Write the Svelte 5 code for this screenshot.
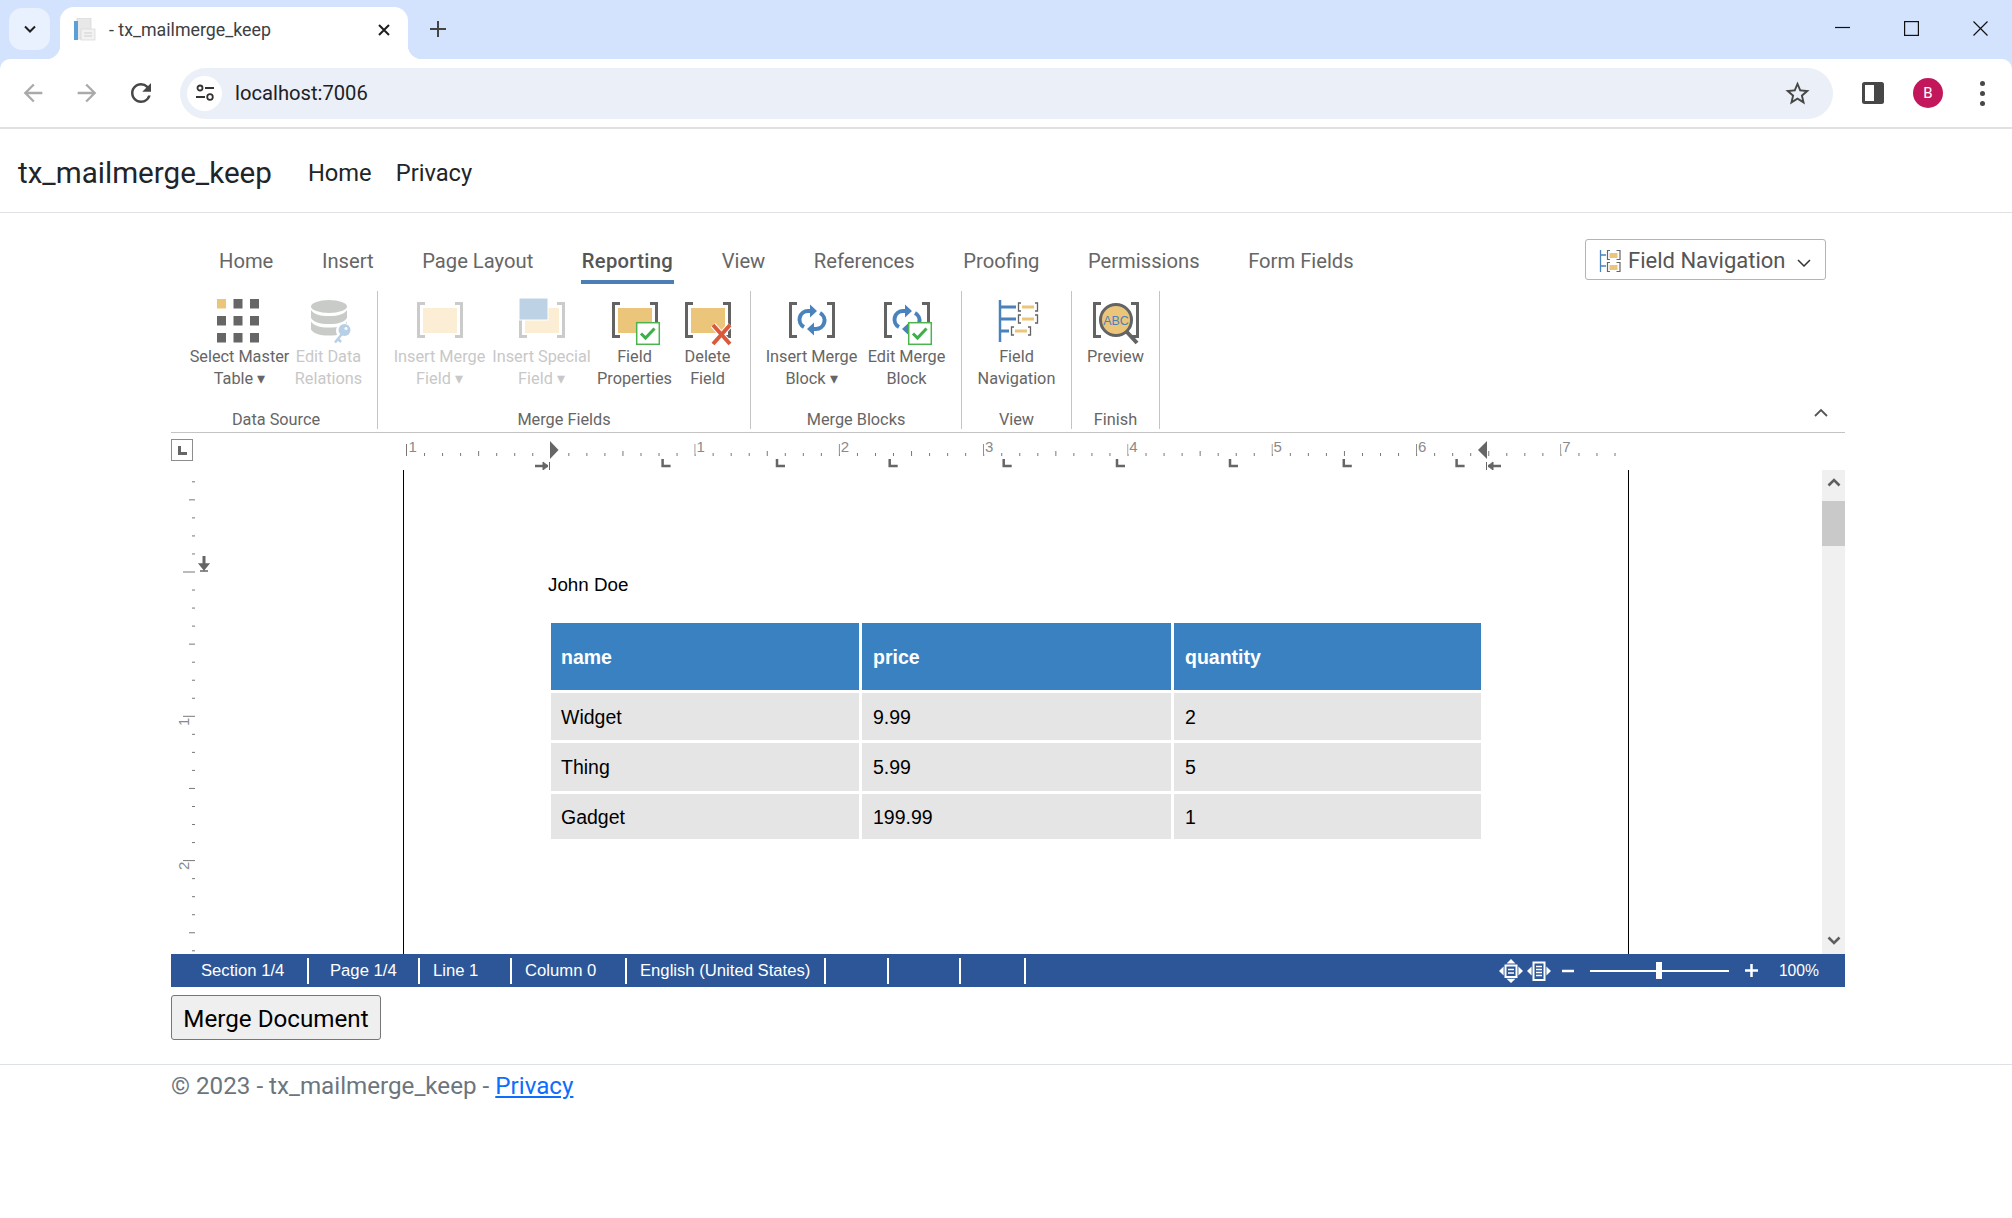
<script>
	const tabs = ['Home', 'Insert', 'Page Layout', 'Reporting', 'View', 'References', 'Proofing', 'Permissions', 'Form Fields']

	const groups = [
		{ label: 'Data Source', width: 207, buttons: [
			{ icon: 'grid', lines: ['Select Master', 'Table ▾'], width: 100 },
			{ icon: 'database', lines: ['Edit Data', 'Relations'], width: 68, off: true }
		] },
		{ label: 'Merge Fields', width: 373, buttons: [
			{ icon: 'field', lines: ['Insert Merge', 'Field ▾'], width: 96, off: true },
			{ icon: 'special', lines: ['Insert Special', 'Field ▾'], width: 98, off: true },
			{ icon: 'props', lines: ['Field', 'Properties'], width: 78 },
			{ icon: 'delete', lines: ['Delete', 'Field'], width: 58 }
		] },
		{ label: 'Merge Blocks', width: 211, buttons: [
			{ icon: 'block', lines: ['Insert Merge', 'Block ▾'], width: 96 },
			{ icon: 'editblock', lines: ['Edit Merge', 'Block'], width: 84 }
		] },
		{ label: 'View', width: 110, buttons: [
			{ icon: 'nav', lines: ['Field', 'Navigation'], width: 100 }
		] },
		{ label: 'Finish', width: 88, buttons: [
			{ icon: 'preview', lines: ['Preview'], width: 70 }
		] }
	]

	const inch = 144.3
	const rulerStart = 406.5
	const hTicks = Array.from({ length: 68 }, (_, i) => i)
		.map(i => ({ x: rulerStart + i * inch / 8, kind: i % 8 === 0 ? 12 : i % 4 === 0 ? 6 : 3 }))
	const hLabels = [[406.5, 1], [694.5, 1], [838.8, 2], [983, 3], [1127.3, 4], [1271.6, 5], [1415.9, 6], [1560.2, 7]]
	const lTabs = [665.6, 780, 892.7, 1006.7, 1120, 1233, 1346.8, 1459.6]

	const vTicks = Array.from({ length: 27 }, (_, i) => i - 5)
		.map(i => ({ y: 573 + i * inch / 8, kind: i % 8 === 0 ? 12 : i % 4 === 0 ? 6 : 3 }))

	const rows = [['Widget', '9.99', '2'], ['Thing', '5.99', '5'], ['Gadget', '199.99', '1']]

	const statusCells = [
		{ text: 'Section 1/4', width: 138, pad: 30 },
		{ text: 'Page 1/4', width: 111, pad: 21 },
		{ text: 'Line 1', width: 92, pad: 13 },
		{ text: 'Column 0', width: 115, pad: 13 },
		{ text: 'English (United States)', width: 199, pad: 13 },
		{ text: '', width: 63, pad: 0 },
		{ text: '', width: 72, pad: 0 },
		{ text: '', width: 65, pad: 0 }
	]
</script>

{#snippet brackets(color)}
	<path d="M9 5.500H2.500V38.500H9M39 5.500H45.500V38.500H39" fill="none" stroke={color} stroke-width="3" />
{/snippet}

{#snippet checkbox()}
	<rect x="25.700" y="24.700" width="22.600" height="21.600" fill="#fff" stroke="#4db44d" stroke-width="1.500" />
	<path d="M30 35.500l4.500 4.500 9-9.500" fill="none" stroke="#3fae49" stroke-width="3" />
{/snippet}

{#snippet cycle()}
	<g fill="none" stroke="#4a82bc" stroke-width="4">
		<path d="M23 13H20A8.500 8.500 0 0 0 16 29" />
		<path d="M25 31H28A8.500 8.500 0 0 0 32 15" />
	</g>
	<path d="M22 6.500L29 13 22 19.500ZM26 24.500L19 31 26 37.500Z" fill="#4a82bc" />
{/snippet}

{#snippet ribbonIcon(name)}
	<svg class="ribbon-icon" viewBox="0 0 48 48" width="48" height="48">
		{#if name === 'grid'}
			{#each [0, 1, 2] as r}
				{#each [0, 1, 2] as c}
					<rect x={1 + c * 16.500} y={1 + r * 17} width="9" height="9.500" fill={r === 0 && c === 0 ? '#ebc57a' : '#666'} />
				{/each}
			{/each}
		{:else if name === 'database'}
			<g fill="#c9cbc9">
				<ellipse cx="24" cy="8.500" rx="18" ry="6.500" />
				<path d="M6 12c3 4 8 6 18 6s15-2 18-6v8c-3 4-8 6-18 6S9 24 6 20z" />
				<path d="M6 23.500c3 4 8 6 18 6s15-2 18-6v8c-3 4-8 6-18 6s-15-2-18-6z" />
			</g>
			<circle cx="39" cy="33" r="8" fill="#fff" />
			<path d="M38 36L30 45" stroke="#fff" stroke-width="6" />
			<circle cx="39.500" cy="32" r="6" fill="#b7d0e8" />
			<path d="M37 36L30 44.500M33 41l3 3" stroke="#b7d0e8" stroke-width="2.500" fill="none" />
			<circle cx="41" cy="30.500" r="1.500" fill="#fff" />
		{:else if name === 'field'}
			{@render brackets('#cbcbcb')}
			<rect x="7" y="10" width="34" height="25" fill="#fbeed5" />
		{:else if name === 'special'}
			{@render brackets('#cbcbcb')}
			<rect x="7" y="10" width="34" height="25" fill="#fbeed5" />
			<rect x="1" y="0" width="29" height="22" fill="#bed2e5" stroke="#fff" stroke-width="1" />
		{:else if name === 'props'}
			{@render brackets('#636363')}
			<rect x="7" y="10" width="34" height="25" fill="#ebc57a" />
			{@render checkbox()}
		{:else if name === 'delete'}
			{@render brackets('#636363')}
			<rect x="7" y="10" width="34" height="25" fill="#ebc57a" />
			<path d="M29 27L46 46M46 27L29 46" stroke="#fff" stroke-width="6" />
			<path d="M29 27L46 46M46 27L29 46" stroke="#d9593a" stroke-width="4" />
		{:else if name === 'block'}
			{@render brackets('#636363')}
			{@render cycle()}
		{:else if name === 'editblock'}
			{@render brackets('#636363')}
			{@render cycle()}
			{@render checkbox()}
		{:else if name === 'nav'}
			<path d="M7 2V44" stroke="#4a82bc" stroke-width="2.500" />
			<path d="M7 9H23M7 21H23M7 33H16" stroke="#4a82bc" stroke-width="3" />
			<g fill="none" stroke="#636363" stroke-width="1.300">
				<path d="M28 5H25.500V13H28M42 5H44.500V13H42" />
				<path d="M28 17H25.500V25H28M42 17H44.500V25H42" />
				<path d="M21 29H18.500V37H21M35 29H37.500V37H35" />
			</g>
			<path d="M29 9H41M29 21H41M22 33H34" stroke="#ebc57a" stroke-width="3" />
		{:else if name === 'preview'}
			{@render brackets('#636363')}
			<path d="M34 33L45 45" stroke="#636363" stroke-width="4" />
			<circle cx="24" cy="22" r="15.500" fill="#ebc57a" stroke="#636363" stroke-width="3" />
			<text x="24" y="26.500" text-anchor="middle" class="abc">ABC</text>
		{/if}
	</svg>
{/snippet}

{#snippet fitIcon(both)}
	<svg viewBox="0 0 24 24" width="24" height="24">
		{#if both}
			<rect x="6.500" y="6.500" width="11" height="11.500" fill="none" stroke="#fff" stroke-width="2" />
			<path d="M9 10.500H15M9 14H15" stroke="#fff" stroke-width="1.600" />
			<path d="M7.500 4.500H16.500L12 0ZM7.500 19.800H16.500L12 24Z" fill="#fff" />
		{:else}
			<rect x="6.500" y="3.500" width="11" height="17.500" fill="none" stroke="#fff" stroke-width="2" />
			<path d="M9 7.500H15M9 10.500H15M9 13.500H15M9 16.500H15" stroke="#fff" stroke-width="1.500" />
		{/if}
		<path d="M4.600 7.500V16.500L0 12ZM19.400 7.500V16.500L24 12Z" fill="#fff" />
	</svg>
{/snippet}

<div class="chrome">
	<div class="tabstrip">
		<button class="tabs-menu" aria-label="Tabs">
			<svg viewBox="0 0 12 8" width="12" height="8"><path d="M1 1.500l5 5 5-5" fill="none" stroke="#1f1f1f" stroke-width="2" /></svg>
		</button>
		<div class="browser-tab">
			<svg class="favicon" viewBox="0 0 23 23" width="23" height="23">
				<rect x="4" y="0" width="14" height="21" fill="#e8e8e8" stroke="#d0d0d0" stroke-width=".6" />
				<rect x="1" y="3" width="4" height="19" fill="#5a9fd6" />
				<rect x="8" y="11" width="14" height="11" fill="#f2f2f2" stroke="#cfcfcf" stroke-width=".6" />
				<path d="M11 15H19M11 18H19" stroke="#cfcfcf" />
			</svg>
			<span class="tab-title">- tx_mailmerge_keep</span>
			<svg class="tab-close" viewBox="0 0 12 12" width="12" height="12"><path d="M1 1L11 11M11 1L1 11" stroke="#1f1f1f" stroke-width="2" /></svg>
		</div>
		<svg class="new-tab" viewBox="0 0 16 16" width="16" height="16"><path d="M8 0V16M0 8H16" stroke="#444" stroke-width="2" /></svg>
		<div class="window-buttons">
			<svg viewBox="0 0 15 15" width="15" height="15"><path d="M0 6.500H15" stroke="#111" stroke-width="1.200" /></svg>
			<svg viewBox="0 0 15 15" width="15" height="15"><rect x=".6" y=".6" width="13.800" height="13.800" fill="none" stroke="#111" stroke-width="1.200" /></svg>
			<svg viewBox="0 0 15 15" width="15" height="15"><path d="M.5 .5L14.500 14.500M14.500 .5L.5 14.500" stroke="#111" stroke-width="1.200" /></svg>
		</div>
	</div>
	<div class="toolbar">
		<svg class="nav-btn" viewBox="0 0 24 24" width="28" height="28"><path fill="#aaa" d="M20 11H7.830l5.590-5.590L12 4l-8 8 8 8 1.410-1.410L7.830 13H20v-2z" /></svg>
		<svg class="nav-btn fwd" viewBox="0 0 24 24" width="28" height="28"><path fill="#aaa" d="M4 11h12.170l-5.590-5.590L12 4l8 8-8 8-1.410-1.410L16.170 13H4v-2z" /></svg>
		<svg class="nav-btn reload" viewBox="0 0 24 24" width="30" height="30"><path fill="#474747" d="M17.650 6.350A7.958 7.958 0 0 0 12 4c-4.420 0-7.990 3.580-7.990 8s3.570 8 7.990 8c3.730 0 6.840-2.550 7.730-6h-2.080A5.990 5.990 0 0 1 12 18c-3.310 0-6-2.690-6-6s2.690-6 6-6c1.660 0 3.140.690 4.220 1.780L13 11h7V4l-2.350 2.350z" /></svg>
		<div class="omnibox">
			<span class="site-info">
				<svg viewBox="0 0 20 20" width="20" height="20">
					<circle cx="5" cy="5" r="2.500" fill="none" stroke="#333" stroke-width="1.800" />
					<path d="M10 5H19M1 14H10" stroke="#333" stroke-width="2" />
					<circle cx="15" cy="14" r="2.800" fill="none" stroke="#333" stroke-width="1.800" />
				</svg>
			</span>
			<span class="url">localhost:7006</span>
			<svg class="star" viewBox="0 0 24 24" width="29" height="29"><path fill="#474747" d="M22 9.240l-7.190-.620L12 2 9.190 8.630 2 9.240l5.460 4.730L5.820 21 12 17.270 18.180 21l-1.630-7.030L22 9.240zM12 15.400l-3.760 2.270 1-4.280-3.320-2.880 4.380-.380L12 6.100l1.710 4.040 4.380.380-3.320 2.880 1 4.280L12 15.400z" /></svg>
		</div>
		<svg class="side-panel" viewBox="0 0 22 22" width="22" height="22"><rect x="0" y="0" width="22" height="22" rx="2.500" fill="#474747" /><rect x="3" y="3" width="9" height="16" fill="#fff" /></svg>
		<span class="avatar">B</span>
		<span class="dots"><i></i><i></i><i></i></span>
	</div>
</div>

<nav class="navbar">
	<span class="brand">tx_mailmerge_keep</span>
	<span class="nav-link">Home</span>
	<span class="nav-link">Privacy</span>
</nav>

<main>
	<div class="editor">
		<div class="ribbon-tabs">
			{#each tabs as tab}
				<span class="ribbon-tab" class:active={tab === 'Reporting'}>{tab}</span>
			{/each}
			<div class="field-nav">
				<svg viewBox="0 0 22 24" width="22" height="24">
					<path d="M1.500 1V23" stroke="#4a82bc" stroke-width="1.300" />
					<path d="M1.500 6H7M1.500 17H7" stroke="#4a82bc" stroke-width="1.300" />
					<g fill="none" stroke="#666" stroke-width="1.200">
						<path d="M11 1.500H8.500V10.500H11M17.500 1.500H21V10.500H17.500" />
						<path d="M11 13.500H8.500V22.500H11M17.500 13.500H21V22.500H17.500" />
					</g>
					<rect x="10.500" y="4" width="8" height="5" fill="#ebc57a" />
					<rect x="10.500" y="16" width="8" height="5" fill="#ebc57a" />
				</svg>
				<span>Field Navigation</span>
				<svg class="chev" viewBox="0 0 14 8" width="14" height="8"><path d="M1 1l6 6 6-6" fill="none" stroke="#333" stroke-width="1.500" /></svg>
			</div>
		</div>

		<div class="ribbon">
			{#each groups as group}
				<section class="group" style="width: {group.width}px">
					<div class="group-buttons">
						{#each group.buttons as btn}
							<div class="ribbon-btn" class:off={btn.off} style="width: {btn.width}px">
								{@render ribbonIcon(btn.icon)}
								{#each btn.lines as line}
									<span class="btn-line">{line}</span>
								{/each}
							</div>
						{/each}
					</div>
					<div class="group-label">{group.label}</div>
				</section>
			{/each}
			<svg class="collapse" viewBox="0 0 14 9" width="14" height="9"><path d="M1 8l6-6 6 6" fill="none" stroke="#555" stroke-width="1.800" /></svg>
		</div>

		<div class="ruler-row">
			<div class="ruler-corner"><span></span></div>
			<svg class="h-ruler" viewBox="193 434 1652 37" width="1652" height="37">
				{#each hTicks as t}
					<line x1={t.x} x2={t.x} y1={t.kind === 12 ? 445 : t.kind === 6 ? 452 : 454} y2="457" stroke="#777" />
				{/each}
				{#each hLabels as [x, n]}
					<rect x={x + 1} y="444" width="10" height="11" fill="#fff" />
					<text x={x + 2} y="453" class="ruler-num">{n}</text>
				{/each}
				<path d="M550 442L558.500 451 550 460Z" fill="#666" />
				<path d="M535 467H548" stroke="#666" stroke-width="2.500" />
				<path d="M543 463L548 467 543 471ZM549.500 463V471" fill="#666" stroke="#666" />
				<path d="M1487 442L1478 451 1487 460Z" fill="#666" />
				<path d="M1488 467H1501" stroke="#666" stroke-width="2.500" />
				<path d="M1493 463L1488 467 1493 471ZM1486.500 463V471" fill="#666" stroke="#666" />
				{#each lTabs as x}
					<path d="M{x - 3} 460V467H{x + 5}" fill="none" stroke="#666" stroke-width="2.500" />
				{/each}
			</svg>
		</div>

		<div class="doc-row">
			<svg class="v-ruler" viewBox="171 471 232 484" width="232" height="484">
				{#each vTicks as t}
					<line x1={195 - t.kind} x2="195" y1={t.y} y2={t.y} stroke="#777" />
				{/each}
				<text transform="translate(189 727) rotate(-90)" class="ruler-num">1</text>
				<text transform="translate(189 871) rotate(-90)" class="ruler-num">2</text>
				<path d="M204 557V568" stroke="#666" stroke-width="3" />
				<path d="M199.500 565H208.500L204 570.500ZM200 572H208" fill="#666" stroke="#666" stroke-width="1.500" />
			</svg>
			<div class="page">
				<p class="recipient">John Doe</p>
				<table>
					<colgroup>
						<col style="width: 308px" />
						<col style="width: 309px" />
						<col style="width: 307px" />
					</colgroup>
					<thead>
						<tr><th>name</th><th>price</th><th>quantity</th></tr>
					</thead>
					<tbody>
						{#each rows as row, i}
							<tr class={'row-' + i}>
								{#each row as cell}<td>{cell}</td>{/each}
							</tr>
						{/each}
					</tbody>
				</table>
			</div>
			<div class="scrollbar">
				<svg viewBox="0 0 14 9" width="14" height="9"><path d="M1.500 7.500L7 2l5.500 5.500" fill="none" stroke="#5f5f5f" stroke-width="2.600" /></svg>
				<div class="thumb"></div>
				<svg class="down" viewBox="0 0 14 9" width="14" height="9"><path d="M1.500 1.500L7 7l5.500-5.500" fill="none" stroke="#5f5f5f" stroke-width="2.600" /></svg>
			</div>
		</div>

		<div class="statusbar">
			{#each statusCells as cell}
				<div class="status-cell" style="width: {cell.width}px; padding-left: {cell.pad}px">{cell.text}</div>
			{/each}
			<div class="status-right">
				{@render fitIcon(true)}
				{@render fitIcon(false)}
				<svg class="zoom-minus" viewBox="0 0 12 12" width="12" height="12"><path d="M0 6H12" stroke="#fff" stroke-width="2.500" /></svg>
				<div class="slider"><span></span></div>
				<svg class="zoom-plus" viewBox="0 0 13 13" width="13" height="13"><path d="M0 6.500H13M6.500 0V13" stroke="#fff" stroke-width="2.500" /></svg>
				<span class="zoom-value">100%</span>
			</div>
		</div>
	</div>

	<button class="merge">Merge Document</button>
</main>

<footer>
	<div>© 2023 - tx_mailmerge_keep - <a href="#privacy">Privacy</a></div>
</footer>

<style>
	:global(body) {
		margin: 0;
		background: #fff;
		font-family: Roboto, "Open Sans", sans-serif;
	}

	.chrome {
		background: #d3e3fd;
		height: 129px;
	}

	.tabstrip {
		display: flex;
		align-items: flex-end;
		height: 59px;
	}

	.tabs-menu {
		width: 41px;
		height: 42px;
		margin: 0 10px 9px 9px;
		padding: 0;
		border: 0;
		border-radius: 13px;
		background: #e9f0fe;
		display: flex;
		align-items: center;
		justify-content: center;
	}

	.browser-tab {
		position: relative;
		display: flex;
		align-items: center;
		width: 348px;
		height: 52px;
		box-sizing: border-box;
		padding: 0 18px 7px 13px;
		background: #fff;
		border-radius: 14px 14px 0 0;
	}

	.browser-tab::before,
	.browser-tab::after {
		content: '';
		position: absolute;
		bottom: 0;
		width: 14px;
		height: 14px;
	}

	.browser-tab::before {
		left: -14px;
		background: radial-gradient(circle at 0 0, transparent 14px, #fff 14.500px);
	}

	.browser-tab::after {
		right: -14px;
		background: radial-gradient(circle at 100% 0, transparent 14px, #fff 14.500px);
	}

	.favicon {
		margin-right: 13px;
	}

	.tab-title {
		flex: 1;
		font-size: 17.800px;
		color: #3c4043;
	}

	.new-tab {
		margin: 0 0 22px 22px;
	}

	.window-buttons {
		display: flex;
		gap: 54px;
		margin: 0 24px 23px auto;
	}

	.toolbar {
		display: flex;
		align-items: center;
		height: 68px;
		border-bottom: 2px solid #e1e1e1;
		background: #fff;
		border-radius: 10px 10px 0 0;
	}

	.nav-btn {
		margin-left: 19px;
	}

	.nav-btn.fwd {
		margin-left: 26px;
	}

	.nav-btn.reload {
		margin-left: 25px;
	}

	.omnibox {
		display: flex;
		align-items: center;
		width: 1653px;
		height: 51px;
		margin-left: 24px;
		border-radius: 26px;
		background: #ebeff7;
	}

	.site-info {
		display: flex;
		align-items: center;
		justify-content: center;
		width: 35px;
		height: 35px;
		margin-left: 7px;
		border-radius: 50%;
		background: #fff;
	}

	.url {
		margin-left: 13px;
		font-size: 20.200px;
		color: #202124;
	}

	.star {
		margin-left: auto;
		margin-right: 21px;
	}

	.side-panel {
		margin-left: 29px;
	}

	.avatar {
		display: flex;
		align-items: center;
		justify-content: center;
		width: 30px;
		height: 30px;
		margin-left: 29px;
		border-radius: 50%;
		background: #c2185b;
		color: #fff;
		font-size: 15px;
	}

	.dots {
		display: flex;
		flex-direction: column;
		gap: 5px;
		margin-left: 37px;
	}

	.dots i {
		display: block;
		width: 5px;
		height: 5px;
		border-radius: 50%;
		background: #474747;
	}

	.navbar {
		display: flex;
		align-items: center;
		height: 84px;
		box-sizing: border-box;
		border-bottom: 1px solid #dee2e6;
		padding: 4px 0 0 18px;
		color: #212529;
	}

	.brand {
		font-size: 29.600px;
		margin-right: 36px;
	}

	.nav-link {
		font-size: 23.700px;
		margin-right: 24px;
	}

	main {
		margin-left: 171px;
		width: 1674px;
	}

	.ribbon-tabs {
		display: flex;
		align-items: flex-end;
		height: 71px;
		padding-left: 47px;
		gap: 46.600px;
		box-sizing: border-box;
		color: #666;
		font-size: 20.200px;
	}

	.ribbon-tab {
		padding: 0 1px 3px;
		border-bottom: 4px solid transparent;
		line-height: 31px;
	}

	.ribbon-tab.active {
		font-weight: 500;
		letter-spacing: .3px;
		color: #555;
		border-bottom-color: #4a7eb5;
	}

	.field-nav {
		display: flex;
		align-items: center;
		width: 241px;
		height: 41px;
		box-sizing: border-box;
		margin: 0 19px 4px auto;
		padding: 2px 0 0 13px;
		border: 1px solid #b4b4b4;
		border-radius: 3px;
		font-size: 22px;
		color: #555;
	}

	.field-nav span {
		margin-left: 7px;
	}

	.chev {
		margin-left: 12px;
		margin-top: 5px;
	}

	.ribbon {
		display: flex;
		height: 149px;
		box-sizing: border-box;
		padding-top: 7px;
		border-bottom: 1.500px solid #c4c4c4;
	}

	.group {
		display: flex;
		flex-direction: column;
		align-items: center;
		height: 138px;
		box-sizing: border-box;
		border-right: 1.500px solid #c4c4c4;
	}

	.group:first-child {
		padding-left: 4px;
	}

	.group-buttons {
		display: flex;
		justify-content: center;
		gap: 5px;
		padding-top: 7px;
	}

	.ribbon-btn {
		display: flex;
		flex-direction: column;
		align-items: center;
		color: #666;
		font-size: 16.300px;
		line-height: 22px;
		white-space: nowrap;
	}

	.ribbon-btn.off {
		color: #c8c8c8;
	}

	.ribbon-icon {
		overflow: visible;
		display: block;
	}

	.abc {
		font: 12.500px "Liberation Sans", Arial, sans-serif;
		fill: #4a82bc;
	}

	.group-label {
		margin-top: auto;
		height: 22px;
		line-height: 22px;
		font-size: 16.300px;
		color: #666;
		margin-bottom: -2px;
	}

	.collapse {
		margin: 117px 17px 0 auto;
	}

	.ruler-row {
		display: flex;
		height: 37px;
	}

	.ruler-corner {
		width: 22px;
		height: 22px;
		box-sizing: border-box;
		margin-top: 6px;
		border: 1.500px solid #8d8d8d;
		display: flex;
		align-items: center;
		justify-content: center;
	}

	.ruler-corner span {
		display: block;
		width: 9px;
		height: 9px;
		border-left: 3.500px solid #666;
		border-bottom: 3.500px solid #666;
		box-sizing: border-box;
	}

	.h-ruler {
		display: block;
	}

	.ruler-num {
		font: 15px "Liberation Sans", Arial, sans-serif;
		fill: #8a8a8a;
	}

	.doc-row {
		display: flex;
		height: 484px;
	}

	.v-ruler {
		display: block;
		flex: none;
	}

	.page {
		width: 1226px;
		box-sizing: border-box;
		border-left: 1.500px solid #000;
		border-right: 1.500px solid #000;
		padding: 103px 0 0 144px;
		font-family: "Liberation Sans", Arial, sans-serif;
		font-size: 18.800px;
		color: #000;
	}

	.recipient {
		margin: 0 0 23px;
		line-height: 24px;
	}

	table {
		border-collapse: separate;
		border-spacing: 3px;
		table-layout: fixed;
		width: 933px;
		margin-left: -.5px;
		font-size: 19.500px;
	}

	th {
		height: 66px;
		padding: 1px 0 0 10.500px;
		text-align: left;
		background: #3a81c2;
		color: #fff;
		font-weight: bold;
	}

	td {
		padding: 1px 0 0 10.500px;
		background: #e5e5e5;
	}

	th:not(:first-child),
	td:not(:first-child) {
		padding-left: 11.500px;
	}

	.row-0 td { height: 46px; }
	.row-1 td { height: 47px; }
	.row-2 td { height: 43px; padding-top: 2px; }

	.scrollbar {
		margin-left: auto;
		width: 23px;
		background: #f0f0f0;
		display: flex;
		flex-direction: column;
		align-items: center;
		padding-top: 8px;
		box-sizing: border-box;
	}

	.thumb {
		width: 23px;
		height: 45px;
		background: #c9c9c9;
		margin-top: 14px;
	}

	.scrollbar .down {
		margin-top: auto;
		margin-bottom: 9px;
	}

	.statusbar {
		display: flex;
		align-items: center;
		height: 33px;
		background: #2c5697;
		color: #fff;
		font-family: "Liberation Sans", Arial, sans-serif;
		font-size: 16.670px;
	}

	.status-cell {
		height: 26px;
		line-height: 26px;
		box-sizing: border-box;
		border-right: 2px solid #fff;
		white-space: nowrap;
	}

	.status-right {
		display: flex;
		align-items: center;
		margin-left: auto;
		padding-right: 26px;
		gap: 4px;
	}

	.zoom-minus {
		margin-left: 7px;
	}

	.slider {
		position: relative;
		width: 139px;
		height: 2px;
		margin-left: 12px;
		background: #fff;
	}

	.slider span {
		position: absolute;
		left: 66px;
		top: -8px;
		width: 6px;
		height: 17px;
		background: #fff;
	}

	.zoom-plus {
		margin-left: 12px;
	}

	.zoom-value {
		margin-left: 17px;
		font-size: 15.700px;
	}

	.merge {
		display: block;
		margin-top: 8px;
		width: 210px;
		height: 45px;
		padding: 2px 0 0;
		background: #efefef;
		border: 1px solid #767676;
		border-radius: 3px;
		font-family: inherit;
		font-size: 24.200px;
		color: #000;
	}

	footer {
		margin-top: 24px;
		border-top: 1px solid #dee2e6;
		padding: 6px 0 0 171px;
		font-size: 24.200px;
		line-height: 30px;
		color: #6c757d;
	}

	footer a {
		color: #0d6efd;
	}
</style>
